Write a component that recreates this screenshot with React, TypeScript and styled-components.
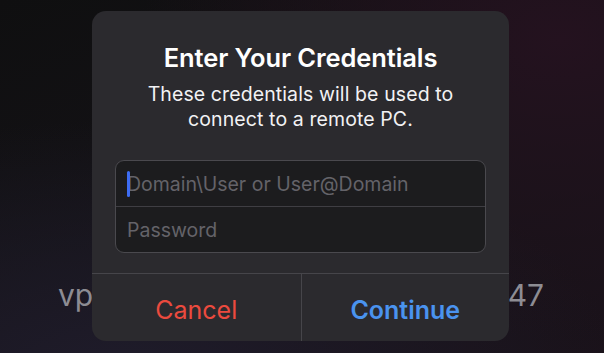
import React from "react";
import styled, { createGlobalStyle } from "styled-components";

const Global = createGlobalStyle`
  html, body { margin: 0; padding: 0; }
  body {
    width: 604px;
    height: 353px;
    overflow: hidden;
    font-family: Inter, "Open Sans", "Liberation Sans", sans-serif;
    -webkit-font-smoothing: antialiased;
  }
`;

const Screen = styled.div`
  position: relative;
  width: 604px;
  height: 353px;
  overflow: hidden;
  background:
    radial-gradient(ellipse 420px 300px at 560px 40px, #24121f 0%, rgba(36, 18, 31, 0) 100%),
    radial-gradient(ellipse 500px 260px at 120px 380px, #1f1c2b 0%, rgba(31, 28, 43, 0) 100%),
    linear-gradient(160deg, #0f0f10 0%, #141216 50%, #1a121a 100%);
`;

const BackRow = styled.div`
  display: flex;
  justify-content: space-between;
  align-items: baseline;
  padding: 277px 60px 0 58px;
  font-size: 30px;
  color: #8d8c93;
  line-height: 36px;
`;

const Overlay = styled.div`
  position: absolute;
  inset: 0;
  display: flex;
  justify-content: flex-start;
  align-items: flex-start;
  padding: 11px 0 0 92px;
  box-sizing: border-box;
`;

const Dialog = styled.div`
  width: 417px;
  height: 330px;
  border-radius: 14px;
  background: #2b2a2e;
  display: flex;
  flex-direction: column;
  overflow: hidden;
`;

const Header = styled.div`
  display: flex;
  flex-direction: column;
  align-items: center;
  text-align: center;
  padding: 31px 24px 0;
`;

const Title = styled.div`
  font-size: 25.5px;
  font-weight: 600;
  color: #ffffff;
  line-height: 32px;
  letter-spacing: -0.1px;
`;

const Subtitle = styled.div`
  margin-top: 8px;
  font-size: 19.5px;
  font-weight: 400;
  color: #f2f2f4;
  line-height: 24.5px;
  letter-spacing: 0.1px;
`;

const Fields = styled.div`
  margin: 29px 23px 0;
  border: 1px solid #4a494e;
  border-radius: 9px;
  background: #1c1c1e;
  display: flex;
  flex-direction: column;
  overflow: hidden;
`;

const Field = styled.div<{ $divider?: boolean }>`
  height: 45px;
  display: flex;
  align-items: center;
  padding-left: 11px;
  border-top: ${(p) => (p.$divider ? "1px solid #3f3e43" : "none")};
  position: relative;
`;

const Placeholder = styled.span`
  font-size: 19.5px;
  color: #646369;
  line-height: 24px;
`;

const Caret = styled.span`
  position: absolute;
  left: 11px;
  top: 10px;
  width: 3px;
  height: 26px;
  border-radius: 1.5px;
  background: #3d6cf2;
`;

const Actions = styled.div`
  margin-top: auto;
  height: 67px;
  border-top: 1px solid #46454a;
  display: grid;
  grid-template-columns: 1fr 1fr;
`;

const Action = styled.button<{ $tone: "cancel" | "primary"; $divider?: boolean }>`
  appearance: none;
  border: none;
  background: transparent;
  font-family: inherit;
  font-size: 25px;
  padding: 4px 0 0;
  font-weight: ${(p) => (p.$tone === "primary" ? 600 : 400)};
  color: ${(p) => (p.$tone === "primary" ? "#4a93ef" : "#ec4a3e")};
  border-left: ${(p) => (p.$divider ? "1px solid #46454a" : "none")};
  display: flex;
  align-items: center;
  justify-content: center;
`;

export default function App() {
  return (
    <>
      <Global />
      <Screen>
        <BackRow>
          <span>vp</span>
          <span>47</span>
        </BackRow>
        <Overlay>
          <Dialog>
            <Header>
              <Title>Enter Your Credentials</Title>
              <Subtitle>
                These credentials will be used to
                <br />
                connect to a remote PC.
              </Subtitle>
            </Header>
            <Fields>
              <Field>
                <Caret />
                <Placeholder>Domain\User or User@Domain</Placeholder>
              </Field>
              <Field $divider>
                <Placeholder>Password</Placeholder>
              </Field>
            </Fields>
            <Actions>
              <Action $tone="cancel">Cancel</Action>
              <Action $tone="primary" $divider>
                Continue
              </Action>
            </Actions>
          </Dialog>
        </Overlay>
      </Screen>
    </>
  );
}
